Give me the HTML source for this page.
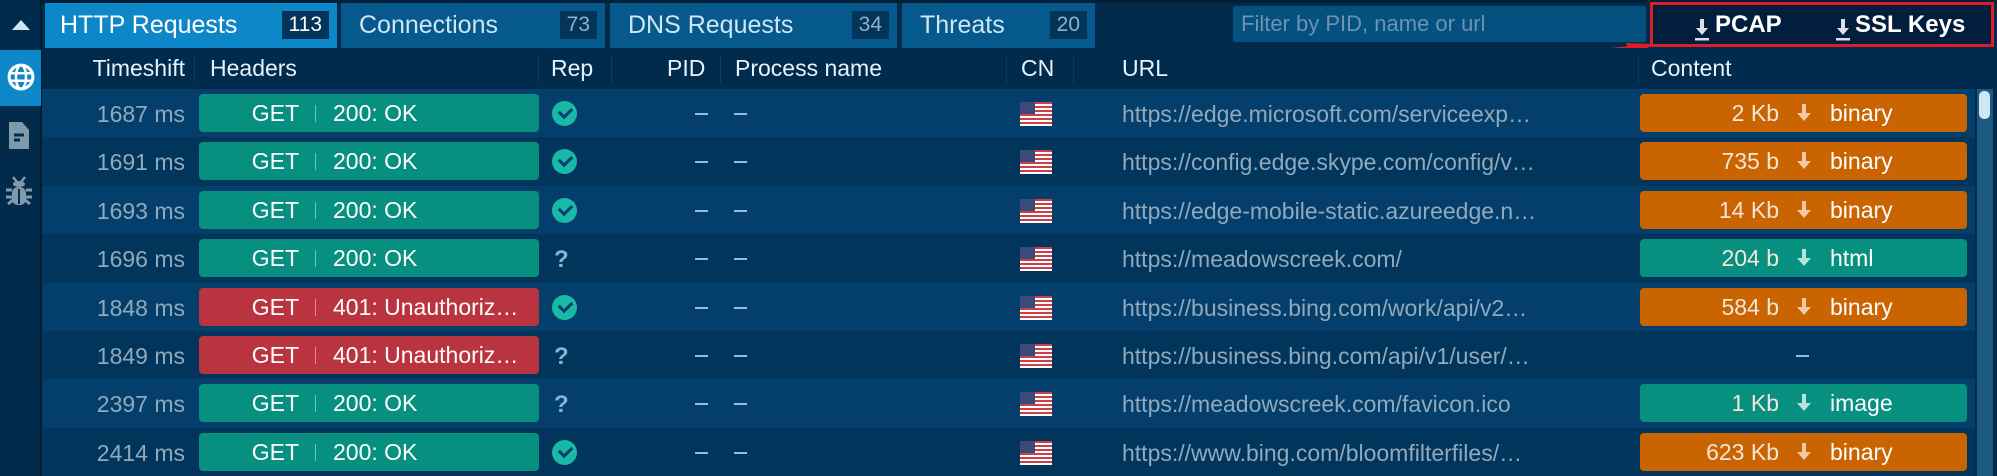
<!DOCTYPE html><html><head><meta charset="utf-8"><style>
*{margin:0;padding:0;box-sizing:border-box}
body{width:1997px;height:476px;overflow:hidden;background:#022a4a;font-family:"Liberation Sans",sans-serif;position:relative;color:#fff}
.a{position:absolute}
.tab{position:absolute;top:3px;height:45px;background:#05598c;color:#cfe6f5;font-size:25px;line-height:45px;padding-left:18px}
.tab .n{position:absolute;right:8px;top:8px;height:28px;line-height:28px;background:#03345a;padding:0 7px;font-size:21px;color:#8fb0c8}
.hd{position:absolute;top:48px;left:42px;width:1955px;height:41px;background:#012b4d;font-size:23px;color:#e8f2fa;line-height:41px}
.hd span{position:absolute}
.sep{position:absolute;top:8px;width:1px;height:27px;background:#0e3d60}
.row{position:absolute;left:42px;width:1933px;height:48.4px;font-size:23px}
.row.l{background:#043f6b}.row.d{background:#02355b}
.row>*{position:absolute}
.ts{left:0;width:143px;top:12px;color:#8fa9bd;text-align:right}
.pill{left:157px;width:340px;top:5px;height:38px;border-radius:4px;background:#07907f;line-height:38px}
.pill.r{background:#b9343e}
.pill .g{position:absolute;right:240px}
.pill .s{position:absolute;left:116px;top:11px;width:1px;height:17px;background:rgba(255,255,255,.45)}
.pill .t{position:absolute;left:134px}
.chk{left:510px;top:12px;width:25px;height:25px;border-radius:50%;background:#19b9a8}
.chk:after{content:"";position:absolute;left:7px;top:6px;width:10px;height:6px;border-left:3px solid #043f6b;border-bottom:3px solid #043f6b;transform:rotate(-45deg)}
.q{left:512px;top:12px;color:#88b4d6;font-weight:bold;font-size:24px}
.dash{top:24px;height:2px;width:13px;background:#8fc0e0}
.flag{left:978px;top:13px;width:32px;height:24px;background:repeating-linear-gradient(#c9404a 0 2px,#fff 2px 4px)}
.flag:after{content:"";position:absolute;left:0;top:0;width:15px;height:12px;background:#3c4a78}
.url{left:1080px;top:12px;color:#8fa9bd}
.cp{left:1598px;width:327px;top:5px;height:38px;border-radius:4px;background:#c96400;line-height:38px}
.cp.gr{background:#07907f}
.cp .sz{position:absolute;right:188px;color:#f5e6da}
.cp .ar{position:absolute;left:157px;top:10px}
.cp .ty{position:absolute;left:190px}
</style></head><body>
<div class="a" style="left:0;top:0;width:1997px;height:3px;background:#021f38"></div>
<div class="a" style="left:0;top:0;width:42px;height:476px;background:#022b4b;border-right:2px solid #011d33"></div>
<div class="a" style="left:12px;top:20px;width:0;height:0;border-left:9px solid transparent;border-right:9px solid transparent;border-bottom:10px solid #cfe6f5"></div>
<div class="a" style="left:0;top:50px;width:41px;height:56px;background:#0d87c8"></div>
<svg class="a" style="left:6px;top:62px" width="30" height="30" viewBox="0 0 24 24"><circle cx="12" cy="12" r="9.5" fill="none" stroke="#fff" stroke-width="2.5"/><ellipse cx="12" cy="12" rx="4" ry="9.5" fill="none" stroke="#fff" stroke-width="2"/><path d="M3 9h18M3 15h18" stroke="#fff" stroke-width="2"/></svg>
<svg class="a" style="left:8px;top:120px" width="22" height="30" viewBox="0 0 22 30"><path d="M1 2h13l7 8v19H1z" fill="#7f99ad"/><path d="M6 15h10M6 20h6" stroke="#022b4b" stroke-width="3"/></svg>
<svg class="a" style="left:5px;top:175px" width="28" height="32" viewBox="0 0 28 32"><path d="M8 2l4 5M20 2l-4 5" stroke="#7f99ad" stroke-width="2.5"/><ellipse cx="14" cy="9" rx="6" ry="3" fill="#7f99ad"/><rect x="7" y="12" width="14" height="18" rx="6" fill="#7f99ad"/><path d="M1 15h6M21 15h6M1 22h6M21 22h6M3 29l5-4M25 29l-5-4" stroke="#7f99ad" stroke-width="3"/><path d="M14 14v15" stroke="#022b4b" stroke-width="2"/></svg>
<div class="tab" style="left:45px;width:292px;background:#0d87c8;color:#fff;padding-left:15px">HTTP Requests<span class="n" style="color:#fff;background:#03345a">113</span></div>
<div class="tab" style="left:341px;width:264px">Connections<span class="n">73</span></div>
<div class="tab" style="left:610px;width:287px">DNS Requests<span class="n">34</span></div>
<div class="tab" style="left:902px;width:193px">Threats<span class="n">20</span></div>
<div class="a" style="left:1233px;top:6px;width:413px;height:36px;background:#04507e;border-radius:2px;color:#6d93b0;font-size:22px;line-height:36px;padding-left:8px">Filter by PID, name or url</div>
<div class="a" style="left:1650px;top:2px;width:344px;height:45px;border:3px solid #e01c2a;background:#011f3c;font-size:24px;font-weight:bold;line-height:40px">
<span class="a" style="left:42px;top:9px"><svg width="14" height="22" viewBox="0 0 14 22"><path d="M5 0h4v9h4l-6 7-6-7h4z" fill="#dde"/><rect y="19" width="14" height="2.5" fill="#dde"/></svg></span><span class="a" style="left:62px">PCAP</span>
<span class="a" style="left:183px;top:9px"><svg width="14" height="22" viewBox="0 0 14 22"><path d="M5 0h4v9h4l-6 7-6-7h4z" fill="#dde"/><rect y="19" width="14" height="2.5" fill="#dde"/></svg></span><span class="a" style="left:202px">SSL Keys</span></div>
<svg class="a" style="left:1330px;top:40px" width="330" height="45"><path d="M6 40L318 6" stroke="#e01c2a" stroke-width="4"/><path d="M322 4l-26 -1 8 18z" fill="#e01c2a"/></svg>
<div class="hd"><span style="left:0;width:143px;text-align:right">Timeshift</span><div class="sep" style="left:152px"></div><span style="left:168px">Headers</span><div class="sep" style="left:496px"></div><span style="left:509px">Rep</span><div class="sep" style="left:569px"></div><span style="left:625px">PID</span><div class="sep" style="left:678px"></div><span style="left:693px">Process name</span><div class="sep" style="left:964px"></div><span style="left:979px">CN</span><div class="sep" style="left:1031px"></div><span style="left:1080px">URL</span><div class="sep" style="left:1596px"></div><span style="left:1609px">Content</span></div>
<div class="a" style="left:1977px;top:89px;width:16px;height:387px;background:#1a5a80"></div>
<div class="a" style="left:1979px;top:91px;width:11px;height:28px;background:#cfe6f5;border-radius:5px"></div>

<div class="row l" style="top:89px"><span class="ts">1687 ms</span><div class="pill"><span class="g">GET</span><i class="s"></i><span class="t">200: OK</span></div><i class="chk"></i><i class="dash" style="left:653px"></i><i class="dash" style="left:692px"></i><i class="flag"></i><span class="url">https://edge.microsoft.com/serviceexp…</span><div class="cp"><span class="sz">2 Kb</span><svg class="ar" width="14" height="18" viewBox="0 0 14 18"><path d="M5 0h4v9h5l-7 8-7-8h5z" fill="#f1c9a6"/></svg><span class="ty">binary</span></div></div>
<div class="row d" style="top:137.4px"><span class="ts">1691 ms</span><div class="pill"><span class="g">GET</span><i class="s"></i><span class="t">200: OK</span></div><i class="chk"></i><i class="dash" style="left:653px"></i><i class="dash" style="left:692px"></i><i class="flag"></i><span class="url">https://config.edge.skype.com/config/v…</span><div class="cp"><span class="sz">735 b</span><svg class="ar" width="14" height="18" viewBox="0 0 14 18"><path d="M5 0h4v9h5l-7 8-7-8h5z" fill="#f1c9a6"/></svg><span class="ty">binary</span></div></div>
<div class="row l" style="top:185.8px"><span class="ts">1693 ms</span><div class="pill"><span class="g">GET</span><i class="s"></i><span class="t">200: OK</span></div><i class="chk"></i><i class="dash" style="left:653px"></i><i class="dash" style="left:692px"></i><i class="flag"></i><span class="url">https://edge-mobile-static.azureedge.n…</span><div class="cp"><span class="sz">14 Kb</span><svg class="ar" width="14" height="18" viewBox="0 0 14 18"><path d="M5 0h4v9h5l-7 8-7-8h5z" fill="#f1c9a6"/></svg><span class="ty">binary</span></div></div>
<div class="row d" style="top:234.2px"><span class="ts">1696 ms</span><div class="pill"><span class="g">GET</span><i class="s"></i><span class="t">200: OK</span></div><span class="q">?</span><i class="dash" style="left:653px"></i><i class="dash" style="left:692px"></i><i class="flag"></i><span class="url">https://meadowscreek.com/</span><div class="cp gr"><span class="sz">204 b</span><svg class="ar" width="14" height="18" viewBox="0 0 14 18"><path d="M5 0h4v9h5l-7 8-7-8h5z" fill="#b5e3dc"/></svg><span class="ty">html</span></div></div>
<div class="row l" style="top:282.6px"><span class="ts">1848 ms</span><div class="pill r"><span class="g">GET</span><i class="s"></i><span class="t">401: Unauthoriz…</span></div><i class="chk"></i><i class="dash" style="left:653px"></i><i class="dash" style="left:692px"></i><i class="flag"></i><span class="url">https://business.bing.com/work/api/v2…</span><div class="cp"><span class="sz">584 b</span><svg class="ar" width="14" height="18" viewBox="0 0 14 18"><path d="M5 0h4v9h5l-7 8-7-8h5z" fill="#f1c9a6"/></svg><span class="ty">binary</span></div></div>
<div class="row d" style="top:331px"><span class="ts">1849 ms</span><div class="pill r"><span class="g">GET</span><i class="s"></i><span class="t">401: Unauthoriz…</span></div><span class="q">?</span><i class="dash" style="left:653px"></i><i class="dash" style="left:692px"></i><i class="flag"></i><span class="url">https://business.bing.com/api/v1/user/…</span><i class="dash" style="left:1754px"></i></div>
<div class="row l" style="top:379.4px"><span class="ts">2397 ms</span><div class="pill"><span class="g">GET</span><i class="s"></i><span class="t">200: OK</span></div><span class="q">?</span><i class="dash" style="left:653px"></i><i class="dash" style="left:692px"></i><i class="flag"></i><span class="url">https://meadowscreek.com/favicon.ico</span><div class="cp gr"><span class="sz">1 Kb</span><svg class="ar" width="14" height="18" viewBox="0 0 14 18"><path d="M5 0h4v9h5l-7 8-7-8h5z" fill="#b5e3dc"/></svg><span class="ty">image</span></div></div>
<div class="row d" style="top:427.8px"><span class="ts">2414 ms</span><div class="pill"><span class="g">GET</span><i class="s"></i><span class="t">200: OK</span></div><i class="chk"></i><i class="dash" style="left:653px"></i><i class="dash" style="left:692px"></i><i class="flag"></i><span class="url">https://www.bing.com/bloomfilterfiles/…</span><div class="cp"><span class="sz">623 Kb</span><svg class="ar" width="14" height="18" viewBox="0 0 14 18"><path d="M5 0h4v9h5l-7 8-7-8h5z" fill="#f1c9a6"/></svg><span class="ty">binary</span></div></div>
</body></html>
